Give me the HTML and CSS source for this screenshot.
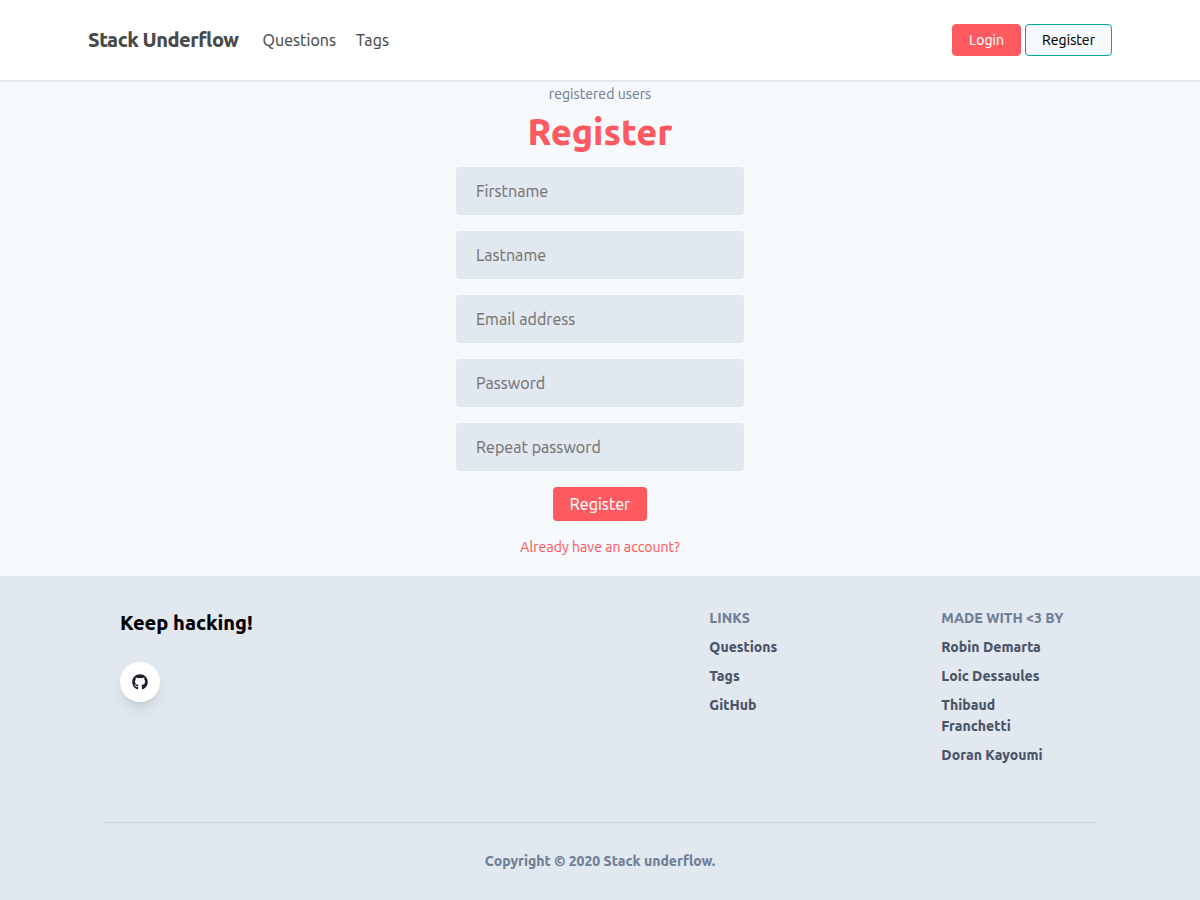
FILE: index.html
```html
<!DOCTYPE html>
<html lang="en">
<head>
<meta charset="utf-8">
<title>Stack Underflow</title>
<link rel="stylesheet" href="styles.css">
</head>
<body>
<header class="header">
  <div class="header-inner">
    <a class="brand">Stack Underflow</a>
    <nav class="nav"><a class="nav-questions">Questions</a><a>Tags</a></nav>
    <div class="actions"><a class="btn btn-login">Login</a><a class="btn btn-outline">Register</a></div>
  </div>
</header>
<main class="main">
  <p class="count">registered users</p>
  <h1 class="title">Register</h1>
  <form class="form">
    <input class="field" type="text" placeholder="Firstname">
    <input class="field" type="text" placeholder="Lastname">
    <input class="field" type="email" placeholder="Email address">
    <input class="field" type="password" placeholder="Password">
    <input class="field" type="password" placeholder="Repeat password">
    <button class="submit" type="button">Register</button>
  </form>
  <a class="login-link">Already have an account?</a>
</main>
<footer class="footer">
  <div class="footer-inner">
    <div class="footer-top">
      <section class="about">
        <h2 class="slogan">Keep hacking!</h2>
        <a class="github" aria-label="GitHub">
          <svg class="github-icon" viewBox="0 0 496 512"><path fill="currentColor" d="M165.9 397.4c0 2-2.3 3.6-5.2 3.6-3.3.3-5.6-1.3-5.6-3.6 0-2 2.3-3.6 5.2-3.6 3-.3 5.6 1.3 5.6 3.6zm-31.1-4.5c-.7 2 1.3 4.3 4.3 4.9 2.6 1 5.6 0 6.2-2s-1.3-4.3-4.3-5.2c-2.6-.7-5.5.3-6.2 2.3zm44.2-1.7c-2.9.7-4.9 2.6-4.6 4.9.3 2 2.9 3.3 5.9 2.6 2.9-.7 4.9-2.6 4.6-4.6-.3-1.9-3-3.2-5.9-2.9zM244.8 8C106.1 8 0 113.3 0 252c0 110.9 69.8 205.8 169.5 239.2 12.8 2.3 17.3-5.6 17.3-12.1 0-6.2-.3-40.4-.3-61.4 0 0-70 15-84.7-29.8 0 0-11.4-29.1-27.8-36.6 0 0-22.9-15.7 1.6-15.4 0 0 24.9 2 38.6 25.8 21.9 38.6 58.6 27.5 72.9 20.9 2.3-16 8.8-27.1 16-33.7-55.9-6.2-112.3-14.3-112.3-110.5 0-27.5 7.6-41.3 23.6-58.9-2.6-6.5-11.1-33.3 2.6-67.9 20.9-6.5 69 27 69 27 20-5.6 41.5-8.5 62.8-8.5s42.8 2.9 62.8 8.5c0 0 48.1-33.6 69-27 13.7 34.7 5.2 61.4 2.6 67.9 16 17.7 25.8 31.5 25.8 58.9 0 96.5-58.9 104.2-114.8 110.5 9.2 7.9 17 22.9 17 46.4 0 33.7-.3 75.4-.3 83.6 0 6.5 4.6 14.4 17.3 12.1C428.2 457.8 496 362.9 496 252 496 113.3 383.5 8 244.8 8z"/></svg>
        </a>
      </section>
      <section class="col">
        <h3 class="col-title">Links</h3>
        <a>Questions</a><a>Tags</a><a>GitHub</a>
      </section>
      <section class="col">
        <h3 class="col-title">Made with &lt;3 by</h3>
        <a>Robin Demarta</a><a>Loic Dessaules</a><a>Thibaud<br>Franchetti</a><a>Doran Kayoumi</a>
      </section>
    </div>
    <p class="copyright">Copyright © 2020 Stack underflow.</p>
  </div>
</footer>
</body>
</html>
```
FILE: styles.css
```css
* { box-sizing: border-box; margin: 0; padding: 0; }
body {
  font-family: Ubuntu, "Noto Sans", sans-serif;
  font-size: 16px;
  font-weight: 400;
  line-height: 24px;
  background: #f7fafc;
  color: #000;
}
.nav, .btn, .count, .field, .submit, .login-link { letter-spacing: 0.07px; -webkit-text-stroke: 0.15px; }
.header { height: 82px; background: #fff; border-bottom: 2px solid #e2e8f0; }
.header-inner { width: 1024px; height: 80px; margin: 0 auto; display: flex; align-items: center; color: #4a4a4a; }
.brand { width: 174.5px; font-size: 20px; font-weight: 800; letter-spacing: -0.5px; white-space: nowrap; }
.nav { display: flex; }
.nav-questions { width: 93.5px; }
.actions { margin-left: auto; display: flex; gap: 4px; }
.btn { height: 32px; border: 1px solid #ff5a5f; border-radius: 4px; font-size: 14px; line-height: 30px; text-align: center; }
.btn-login { width: 69px; background: #ff5a5f; color: #fff; }
.btn-outline { width: 87px; background: #f7fafc; border-color: #00a699; color: #000; }
.main { height: 494px; display: flex; flex-direction: column; align-items: center; }
.count { margin-top: 2px; font-size: 14px; line-height: 21px; color: #718096; }
.title { font-size: 36px; line-height: 54px; font-weight: 800; color: #ff5a5f; }
.form { width: 288px; margin-top: 8px; display: flex; flex-direction: column; align-items: center; gap: 16px; }
.field, .submit { font-family: inherit; font-size: 16px; font-weight: 400; }
.field { width: 100%; height: 48px; padding: 0 20px; border: 0; border-radius: 4px; background: #e2e8f0; }
.field::placeholder { color: #757575; opacity: 1; }
.submit { width: 94px; height: 34px; border: 0; border-radius: 4px; background: #ff5a5f; color: #fff; }
.login-link { margin-top: 16px; font-size: 14px; line-height: 21px; color: #ff5a5f; }
.footer { height: 324px; background: #e2e8f0; }
.footer-inner { width: 992px; margin: 0 auto; }
.footer-top { height: 247px; padding: 32px 16px 0; display: grid; grid-template-columns: 589.33px 232px 1fr; border-bottom: 1px solid #cbd5e0; }
.slogan { font-size: 20px; line-height: 30px; font-weight: 800; }
.github { width: 40px; height: 40px; margin-top: 24px; display: flex; align-items: center; justify-content: center; border-radius: 50%; background: #fff; color: #1a202c; box-shadow: 0 10px 15px -3px rgba(0,0,0,.1), 0 4px 6px -2px rgba(0,0,0,.05); }
.github-icon { width: 16px; height: 16px; }
.col { display: flex; flex-direction: column; align-items: flex-start; gap: 8px; color: #4a5568; font-size: 14px; line-height: 21px; font-weight: 800; white-space: nowrap; }
.col-title { font-size: inherit; font-weight: inherit; text-transform: uppercase; color: #718096; }
.copyright { margin-top: 28px; text-align: center; font-size: 14px; line-height: 21px; font-weight: 800; color: #718096; }
```
